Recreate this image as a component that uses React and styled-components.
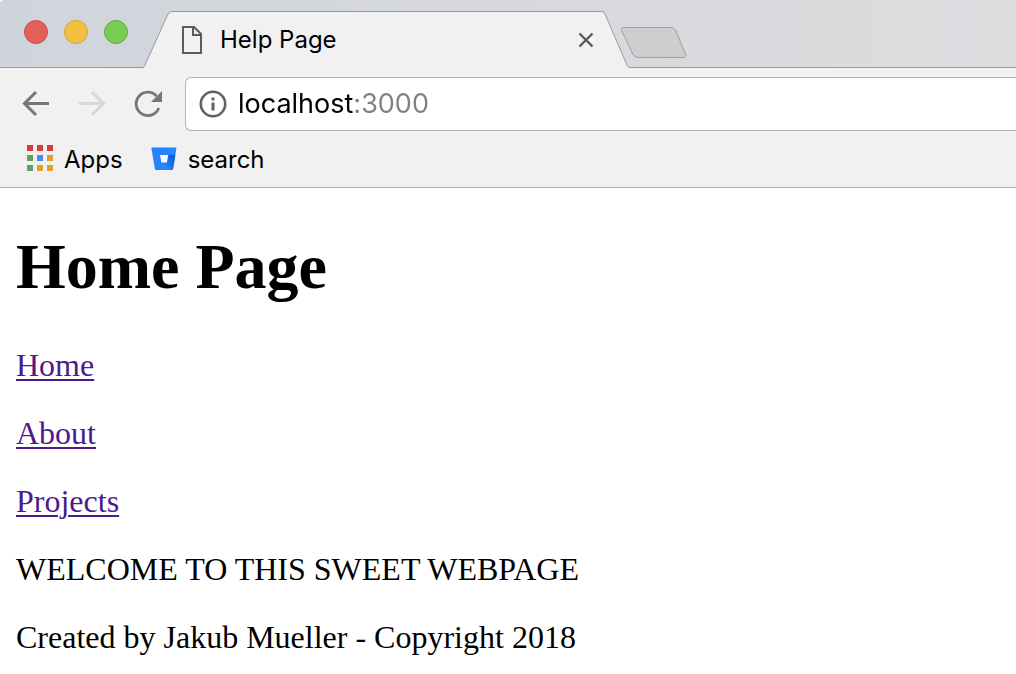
import React from "react";
import styled, { createGlobalStyle } from "styled-components";

const ui = `Inter, "Open Sans", sans-serif`;

const GlobalStyle = createGlobalStyle`
  *, *::before, *::after { box-sizing: border-box; }
  body { margin: 0; background: #fff; color: #000; }
  button { padding: 0; border: 0; background: none; display: flex; }
  svg { display: block; flex: none; }
`;

const TabStrip = styled.header`
  display: flex;
  align-items: flex-start;
  height: 68px;
  border-bottom: 1px solid #979a9e;
  border-top-left-radius: 4px;
  background: linear-gradient(to right, #d0d5dd, #d1d5dc 20%, #d9dadd 62%, #dbdcde);
`;

const WindowControls = styled.div`
  display: flex;
  gap: 16px;
  padding: 20px 15px 0 24px;
`;

const WindowButton = styled.button`
  width: 24px;
  height: 24px;
  border-radius: 50%;
  border: 1px solid ${(p) => p.$edge};
  background: ${(p) => p.$fill};
`;

const Tab = styled.div`
  position: relative;
  display: flex;
  align-items: center;
  flex: 0 1 487px;
  min-width: 240px;
  height: 57px;
  margin-top: 11px;
  padding: 0 36px 0 39px;
`;

const TabShape = styled.svg`
  position: absolute;
  inset: 0;
  width: 100%;
  height: 57px;
`;

const TabTitle = styled.span`
  position: relative;
  flex: 1;
  margin-left: 18px;
  font: 24px/32px ${ui};
  white-space: nowrap;
`;

const Layer = styled.span`
  position: relative;
`;

const CloseButton = styled.button`
  position: relative;
`;

const NewTab = styled.button`
  margin: 26px 0 0 -10px;
  position: relative;
`;

const Toolbar = styled.div`
  display: flex;
  align-items: center;
  height: 63px;
  padding-top: 9px;
  background: #f1f1f1;
`;

const NavButtons = styled.nav`
  display: flex;
  gap: 24px;
  padding: 0 21px 0 20px;
`;

const AddressBar = styled.label`
  display: flex;
  align-items: center;
  flex: 1;
  gap: 10px;
  height: 54px;
  padding-left: 12px;
  border: 1px solid #b3b3b3;
  border-right: 0;
  border-radius: 6px 0 0 6px;
  background: #fff;
`;

const AddressInput = styled.input`
  flex: 1;
  min-width: 0;
  height: 40px;
  padding: 0;
  border: 0;
  outline: 0;
  font: 27px/40px ${ui};
  color: transparent;
  background: linear-gradient(to right, #000 117px, #808080 117px);
  background-clip: text;
  -webkit-background-clip: text;
`;

const BookmarksBar = styled.nav`
  display: flex;
  align-items: center;
  gap: 28px;
  height: 57px;
  padding: 2px 0 0 26px;
  border-bottom: 1px solid #b3b3b3;
  background: #f1f1f1;
`;

const Bookmark = styled.a`
  display: flex;
  align-items: center;
  gap: 11px;
  font: 24px/32px ${ui};
  color: #000;
  text-decoration: none;
`;

const Page = styled.main`
  padding: 42px 16px 16px;
  font: 32px/36px "Liberation Serif", "Times New Roman", serif;
`;

const Heading = styled.h1`
  margin: 0 0 43px;
  font-size: 64px;
  line-height: 74px;
`;

const Paragraph = styled.p`
  margin: 0 0 32px;
`;

const PageLink = styled.a`
  color: #4b1a8e;
  text-decoration-thickness: 2px;
  text-underline-offset: 3px;
`;

const appColors = [
  "#d73b36", "#d73b36", "#d73b36",
  "#60a060", "#4f8bee", "#dfa126",
  "#60a060", "#dfa126", "#dfa126",
];

const PageIcon = () => (
  <svg width="20" height="28" viewBox="0 0 20 28" fill="none" stroke="#5a5a5a" strokeWidth="2">
    <path d="M1 1H12L19 8V27H1Z M11 1V9H19" />
  </svg>
);

const InfoIcon = () => (
  <svg width="30" height="30" viewBox="0 0 30 30">
    <circle cx="15" cy="15" r="12.2" fill="none" stroke="#5f6368" strokeWidth="2.6" />
    <path d="M13.5 8.5h3v3h-3zM13.5 13.5h3v8h-3z" fill="#5f6368" />
  </svg>
);

const Arrow = ({ color, forward }) => (
  <svg width="32" height="32" viewBox="0 0 32 32" fill="none" stroke={color} strokeWidth="3">
    <path d={forward ? "M3 15.5H27M16 4L27.5 15.5L16 27" : "M29 15.5H5M16 4L4.5 15.5L16 27"} />
  </svg>
);

const ReloadIcon = () => (
  <svg width="32" height="32" viewBox="0 0 32 32">
    <path d="M26.8 20A11.7 11.7 0 1 1 24.5 8" fill="none" stroke="#73777b" strokeWidth="2.8" />
    <path d="M30 3V14H19Z" fill="#73777b" />
  </svg>
);

const AppsIcon = () => (
  <svg width="27" height="30" viewBox="0 0 27 30">
    {appColors.map((c, i) => (
      <rect key={i} x={1 + (i % 3) * 10} y={Math.floor(i / 3) * 10} width="6" height="6" fill={c} />
    ))}
  </svg>
);

const BucketIcon = () => (
  <svg width="26" height="26" viewBox="0 0 26 26">
    <defs>
      <linearGradient id="bucket" x1="25" y1="8" x2="13" y2="18" gradientUnits="userSpaceOnUse">
        <stop offset="0.1" stopColor="#0a58d0" />
        <stop offset="1" stopColor="#2684ff" />
      </linearGradient>
    </defs>
    <path d="M1.2 .5H24.8Q25.6 .5 25.4 1.4L22.1 22.1Q21.9 23 21 23H5Q4.1 23 3.9 22.1L.4 1.4Q.3 .5 1.2 .5Z" fill="#2684ff" />
    <path d="M24.3 8H17.2L15.9 15.5H10.4L4.1 22.6Q4.5 23 5 23H21Q21.9 23 22.1 22.1Z" fill="url(#bucket)" />
    <path d="M9 8H17.2L15.9 15.5H10.4Z" fill="#f8faff" />
  </svg>
);

export default function App() {
  return (
    <>
      <GlobalStyle />
      <TabStrip>
        <WindowControls>
          <WindowButton aria-label="Close window" $fill="#e2605a" $edge="#cb4b47" />
          <WindowButton aria-label="Minimize window" $fill="#f1c142" $edge="#d9a238" />
          <WindowButton aria-label="Zoom window" $fill="#79ce51" $edge="#60ad40" />
        </WindowControls>
        <Tab>
          <TabShape viewBox="0 0 487 57" preserveAspectRatio="none">
            <path d="M0 57Q1 56 2 54L25 3Q26 .5 29 .5H458Q461 .5 462 3L484 54Q485 56 487 57Z" fill="#f1f1f1" />
            <path d="M0 57Q1 56 2 54L25 3Q26 .5 29 .5H458Q461 .5 462 3L484 54Q485 56 487 57" fill="none" stroke="#979a9e" />
          </TabShape>
          <Layer><PageIcon /></Layer>
          <TabTitle>Help Page</TabTitle>
          <CloseButton aria-label="Close tab">
            <svg width="16" height="16" viewBox="0 0 16 16" fill="none" stroke="#5a5a5a" strokeWidth="2.4">
              <path d="M1.5 1.5L14.5 14.5M14.5 1.5L1.5 14.5" />
            </svg>
          </CloseButton>
        </Tab>
        <NewTab aria-label="New tab">
          <svg width="68" height="33" viewBox="0 0 68 33">
            <path d="M4 1.5H51Q54 1.5 55.5 4L65.5 28Q67 31.5 64 31.5H18Q14.5 31.5 13 28.5L1.5 4.5Q.5 1.5 4 1.5Z" fill="#cecece" stroke="#9fa0a0" />
          </svg>
        </NewTab>
      </TabStrip>
      <Toolbar>
        <NavButtons aria-label="History">
          <button aria-label="Back"><Arrow color="#73777b" /></button>
          <button aria-label="Forward"><Arrow color="#d8d8d8" forward /></button>
          <button aria-label="Reload"><ReloadIcon /></button>
        </NavButtons>
        <AddressBar>
          <InfoIcon />
          <AddressInput type="text" aria-label="Address" defaultValue="localhost:3000" />
        </AddressBar>
      </Toolbar>
      <BookmarksBar aria-label="Bookmarks">
        <Bookmark href="#apps"><AppsIcon />Apps</Bookmark>
        <Bookmark href="#search"><BucketIcon />search</Bookmark>
      </BookmarksBar>
      <Page>
        <Heading>Home Page</Heading>
        <Paragraph><PageLink href="#home">Home</PageLink></Paragraph>
        <Paragraph><PageLink href="#about">About</PageLink></Paragraph>
        <Paragraph><PageLink href="#projects">Projects</PageLink></Paragraph>
        <Paragraph>WELCOME TO THIS SWEET WEBPAGE</Paragraph>
        <Paragraph>Created by Jakub Mueller - Copyright 2018</Paragraph>
      </Page>
    </>
  );
}
